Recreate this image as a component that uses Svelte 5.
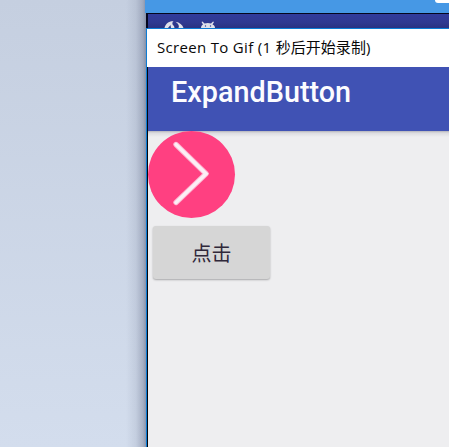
<script>
  const title = 'ExpandButton';
</script>

<div class="desktop">
  <div class="wallpaper"></div>
  <main class="window">
    <div class="emulator-bar"><span class="tab"></span></div>
    <div class="status">
      <svg width="70" height="14" viewBox="0 0 70 14" fill="#dfe0ea">
        <path d="M16.500 14C17.500 9.500 21 7 25.500 7.300C23.500 9 24.500 11 26 12L26.500 14H23L22.500 11L20 14Z" />
        <path d="M27.500 7.700C31.500 8.500 34.500 10.500 35.500 14H30.500C31.500 11.500 30.500 9.500 27.500 7.700Z" />
        <path d="M53 14C53 12 54 11 55 10.500L53.500 8L54.500 7.500L56.500 9.500Q60 8.500 63 9.500L65 7.500L66 8L64.500 10.500C66 11 67 12 67 14Z" />
        <circle cx="57.500" cy="12" r=".7" fill="#303b98" />
        <circle cx="62.500" cy="12" r=".7" fill="#303b98" />
      </svg>
    </div>
    <div class="recorder">
      <span class="latin">Screen To Gif (1&nbsp;</span><span class="cjk">秒后开始录制</span><span class="latin">)</span>
    </div>
    <div class="screen">
      <header><h1>{title}</h1></header>
      <section>
        <div class="circle" role="button" tabindex="-1" aria-label={title}>
          <svg width="87" height="87" viewBox="0 0 87 87" fill="none">
            <path d="M28 13.500L58 42.800L28 71.500" stroke="#ffb3d0" stroke-width="5.400" stroke-linecap="round" stroke-linejoin="round" />
            <path d="M28 13.500L58 42.800L28 71.500" stroke="#fbeff5" stroke-width="3.600" stroke-linecap="round" />
          </svg>
        </div>
        <button>点击</button>
      </section>
    </div>
  </main>
</div>

<style>
  :global(body) { margin: 0; overflow: hidden; }
  .desktop {
    width: 449px; height: 447px; display: flex; overflow: hidden;
    background: linear-gradient(#c5cfe0, #d3dded);
  }
  .wallpaper {
    width: 146px; flex: none;
    background: linear-gradient(90deg, transparent 126px, #6f789226 136px, #6f789270 143px, #606a86a0 146px);
  }
  .window { flex: 1; display: flex; flex-direction: column; min-width: 0; }
  .emulator-bar {
    height: 13px; flex: none; margin-left: -1px; background: #4698e5;
    display: flex; justify-content: flex-end;
  }
  .tab { width: 14px; height: 3px; background: #fff; border-radius: 0 0 0 3px; }
  .status {
    height: 14px; flex: none; border-top: 1px solid #05061d; border-left: 2px solid #05061d;
    background: linear-gradient(#313b9c, #2f3991 60%, #293282);
  }
  .status svg { display: block; }
  .recorder {
    box-sizing: border-box; height: 39px; flex: none; padding: 0 0 3px 10px;
    border-top: 1px solid #0c7cd5; border-left: 1px solid #0c7cd5;
    background: #fff; display: flex; align-items: center;
    color: #080808; white-space: pre; line-height: 20px;
  }
  .latin { font: 15px/20px "Open Sans", "Noto Sans", sans-serif; letter-spacing: .32px; }
  .cjk { font: 15px/20px "Noto Sans CJK SC", sans-serif; letter-spacing: .05px; }
  .screen {
    flex: 1; border-left: 1px solid #087bd5; box-shadow: inset 1px 0 #05070d;
    padding-left: 1px; display: flex; flex-direction: column; background: #eeeef0;
  }
  header { height: 64px; flex: none; background: #4052b4; padding-left: 23px; }
  h1 {
    margin: 0; padding-top: 7px; color: #fcfcff;
    font: 500 28.800px/36px Roboto, sans-serif; white-space: nowrap;
  }
  section {
    flex: 1; display: flex; flex-direction: column; align-items: flex-start;
    background: linear-gradient(#b4b4bb, #dcdce0 2px, #eeeef0 6px);
  }
  .circle { width: 87px; height: 87px; border-radius: 50%; background: #ff4081; }
  .circle svg { display: block; }
  button {
    margin: 8px 0 0 5px; width: 117px; height: 53px; padding: 0;
    border: 0; border-radius: 3px; background: #d6d6d6; color: #30283a;
    box-shadow: 0 1px 2px #0000004d; font: 400 20px/24px "Noto Sans CJK SC", sans-serif;
  }
</style>
